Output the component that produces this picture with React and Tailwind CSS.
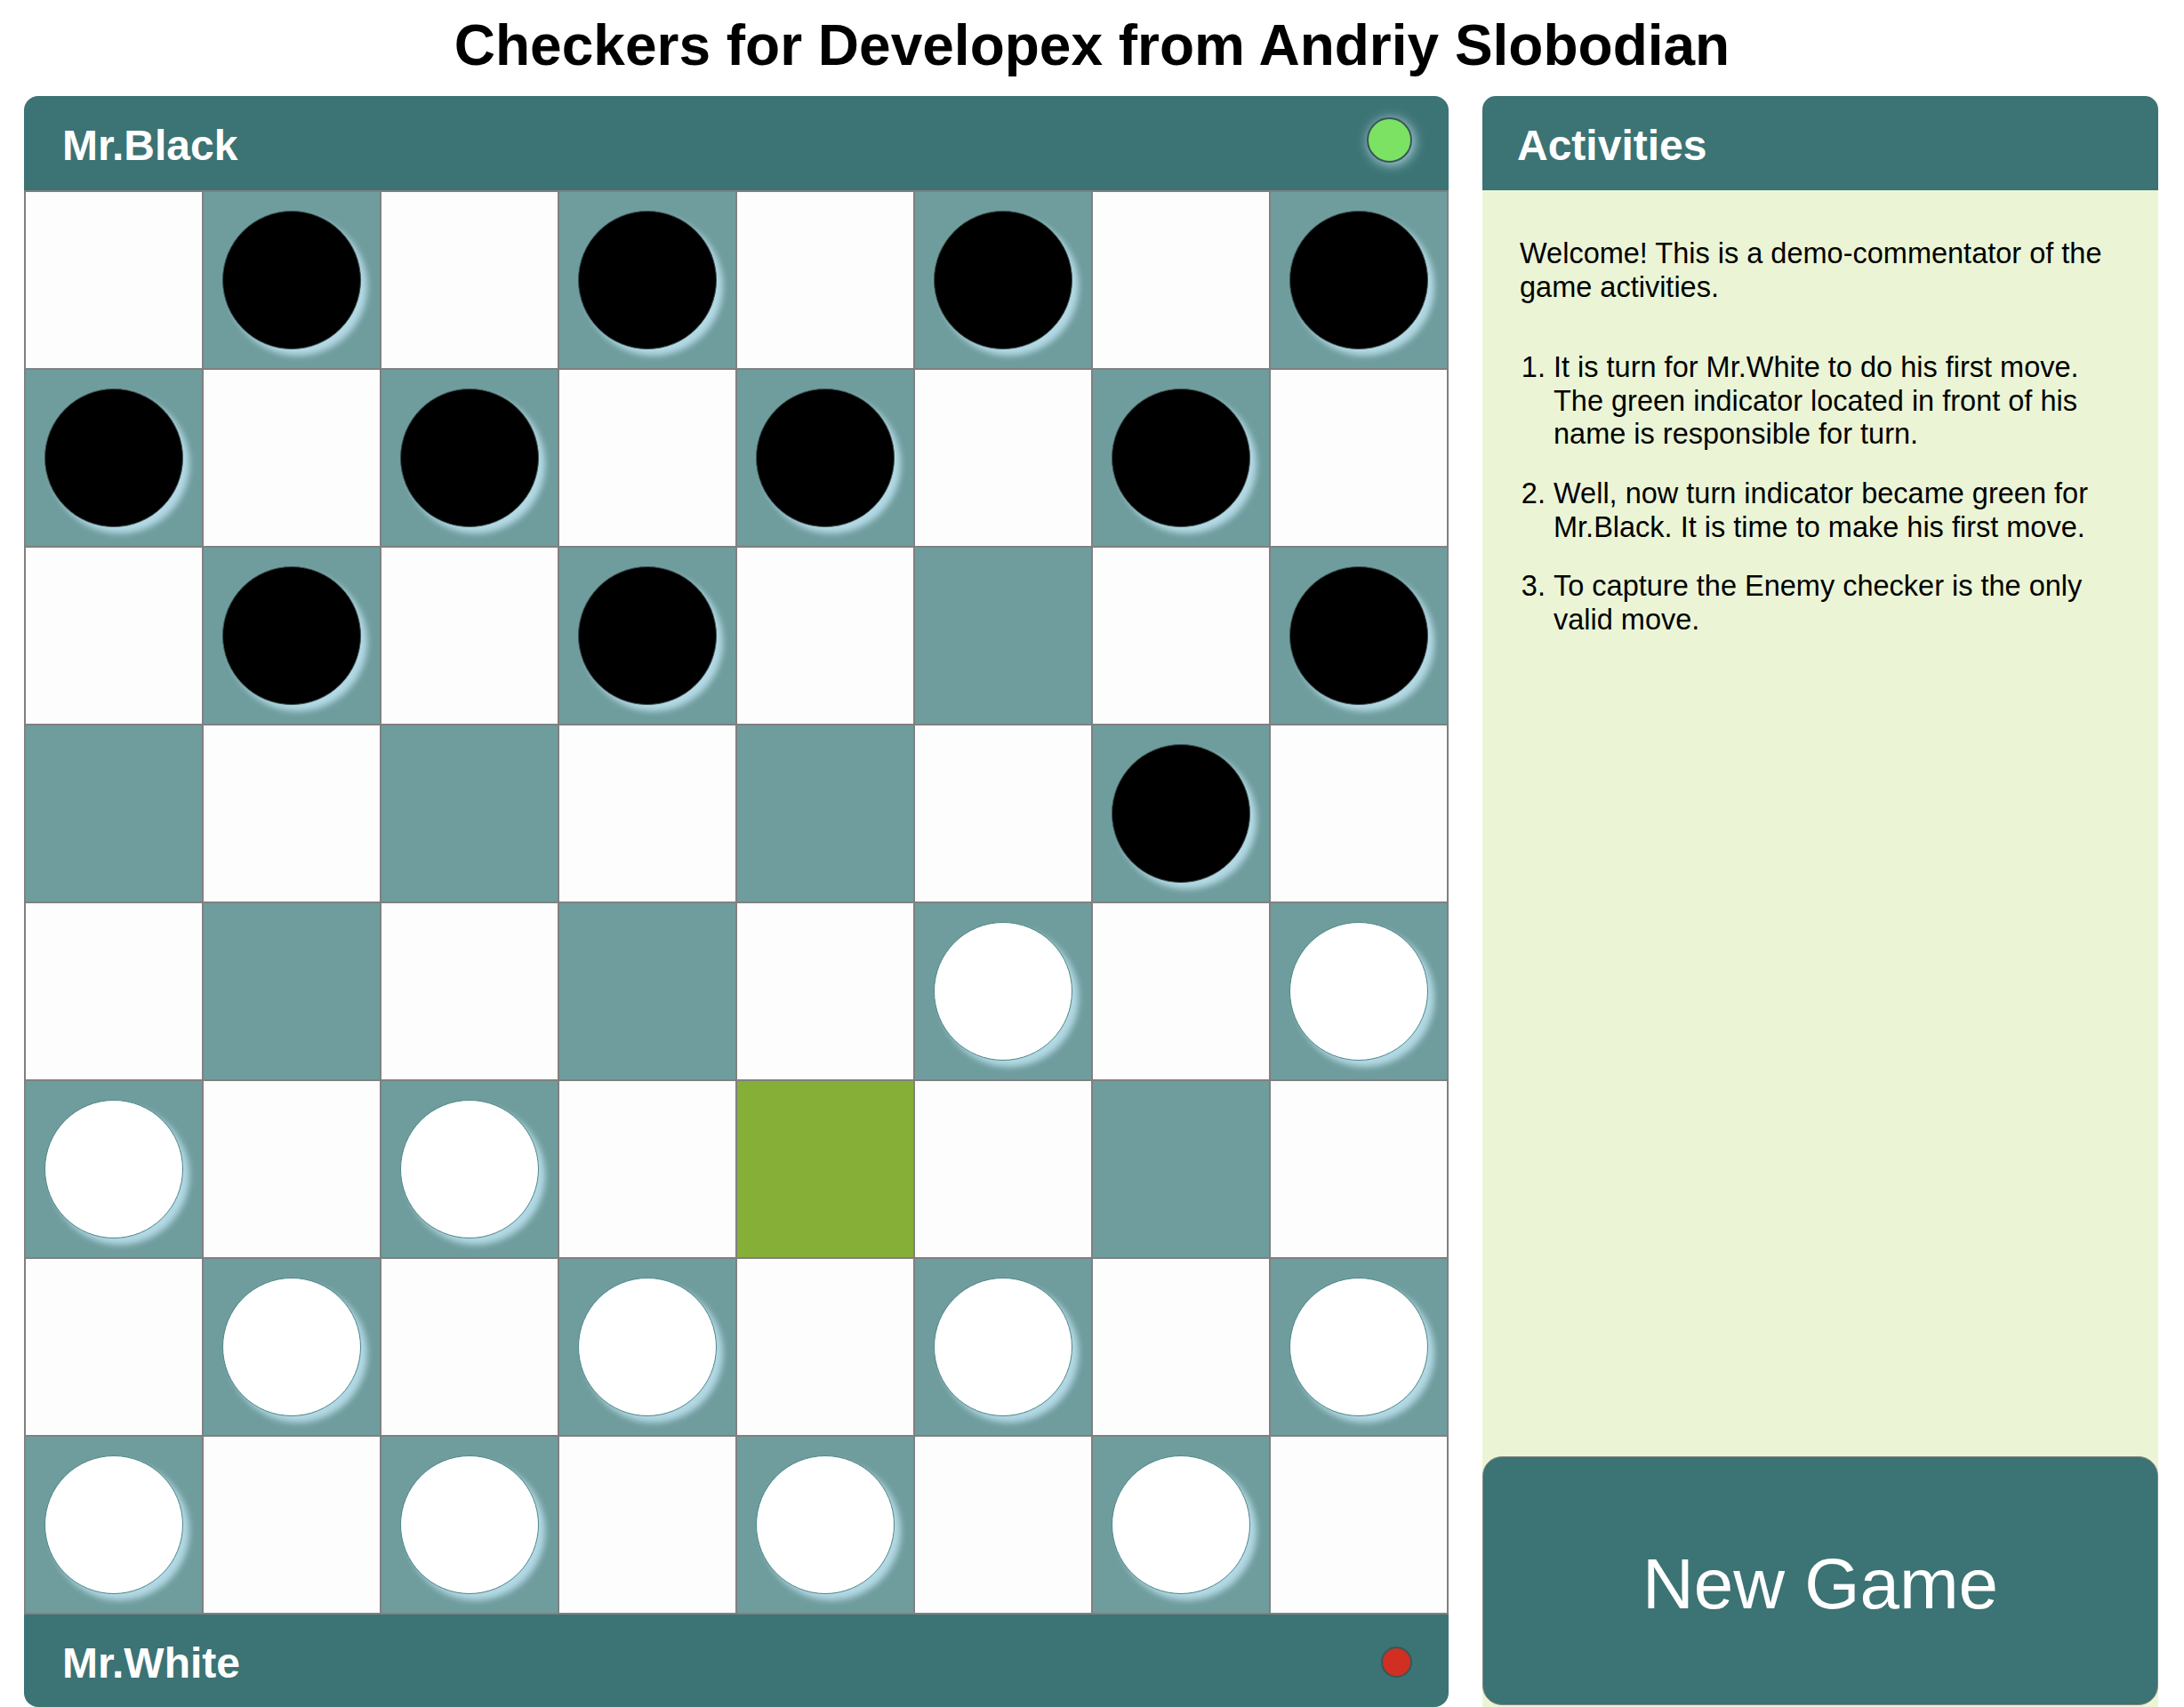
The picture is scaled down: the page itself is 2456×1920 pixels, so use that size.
import React from 'react'

// board rows from top: b = black checker, w = white checker, g = highlighted square
const BOARD = [
  '.b.b.b.b',
  'b.b.b.b.',
  '.b.b...b',
  '......b.',
  '.....w.w',
  'w.w.g...',
  '.w.w.w.w',
  'w.w.w.w.',
]

function Checker({ color }) {
  const tone = color === 'b'
    ? 'bg-black border-[#3d5252]'
    : 'bg-white border-[#4d8787]'
  return (
    <div className={`w-[156px] h-[156px] rounded-full border-[1.5px] shadow-[7px_7px_7px_#b3d9e5] ${tone}`} />
  )
}

function Cell({ row, col, piece }) {
  const dark = (row + col) % 2 === 1
  let bg = dark ? 'bg-[#6f9c9d]' : 'bg-[#fdfdfd]'
  if (piece === 'g') bg = 'bg-[#86af38]'
  return (
    <div className={`w-[198px] h-[198px] flex items-center justify-center ${bg}`}>
      {(piece === 'b' || piece === 'w') && <Checker color={piece} />}
    </div>
  )
}

function PlayerBar({ name, active, rounded }) {
  return (
    <div className={`flex items-center justify-between bg-[#3c7374] pl-[43px] pr-[41px] ${rounded}`}>
      <span className="pt-[6px] text-[48px] font-bold text-white leading-none">{name}</span>
      {active ? (
        <div className="w-[51px] h-[51px] mb-[8px] rounded-full bg-[#7be264] border-2 border-[#3a5656] shadow-[2px_2px_14px_#b6dbe6]" />
      ) : (
        <div className="w-[35px] h-[35px] mt-[2px] rounded-full bg-[#d02f22] border-2 border-[#3a5656]" />
      )}
    </div>
  )
}

export default function App() {
  return (
    <div className="w-[2456px] h-[1920px] overflow-hidden bg-white text-black" style={{ fontFamily: '"Liberation Sans", Arial, sans-serif' }}>
      <h1 className="h-[108px] flex items-center justify-center pb-[6px] text-[64px] font-bold leading-none">
        Checkers for Developex from Andriy Slobodian
      </h1>

      <div className="flex items-start gap-[38px] pl-[27px]">
        {/* game board */}
        <div className="w-[1602px] flex flex-col">
          <div className="h-[106px] flex flex-col">
            <PlayerBar name="Mr.Black" active rounded="h-full rounded-t-[16px]" />
          </div>
          <div className="grid grid-cols-[repeat(8,198px)] gap-[2px] p-[2px] bg-[#808080]">
            {BOARD.map((line, r) =>
              line.split('').map((p, c) => <Cell key={`${r}-${c}`} row={r} col={c} piece={p} />)
            )}
          </div>
          <div className="h-[104px] flex flex-col">
            <PlayerBar name="Mr.White" rounded="h-full rounded-b-[16px]" />
          </div>
        </div>

        {/* activities */}
        <div className="w-[760px] h-[1812px] flex flex-col rounded-t-[15px] overflow-hidden">
          <div className="h-[106px] shrink-0 flex items-center bg-[#3c7374] px-[39px]">
            <span className="pt-[6px] text-[48px] font-bold text-white leading-none">Activities</span>
          </div>
          <div className="flex-1 flex flex-col bg-[#ebf5d6]">
            <div className="pt-[53px] px-[42px] text-[32.5px] leading-[37.6px]">
              <p>Welcome! This is a demo-commentator of the game activities.</p>
              <ol className="list-decimal pl-[38px] mt-[53px] flex flex-col gap-[29px]">
                <li>It is turn for Mr.White to do his first move. The green indicator located in front of his name is responsible for turn.</li>
                <li>Well, now turn indicator became green for Mr.Black. It is time to make his first move.</li>
                <li>To capture the Enemy checker is the only valid move.</li>
              </ol>
            </div>
            <button className="mt-auto mb-[2px] h-[280px] w-full pt-[8px] rounded-[22px] border-[1.5px] border-[#888888] bg-[#3c7374] text-white text-[80px] leading-none">
              New Game
            </button>
          </div>
        </div>
      </div>
    </div>
  )
}
